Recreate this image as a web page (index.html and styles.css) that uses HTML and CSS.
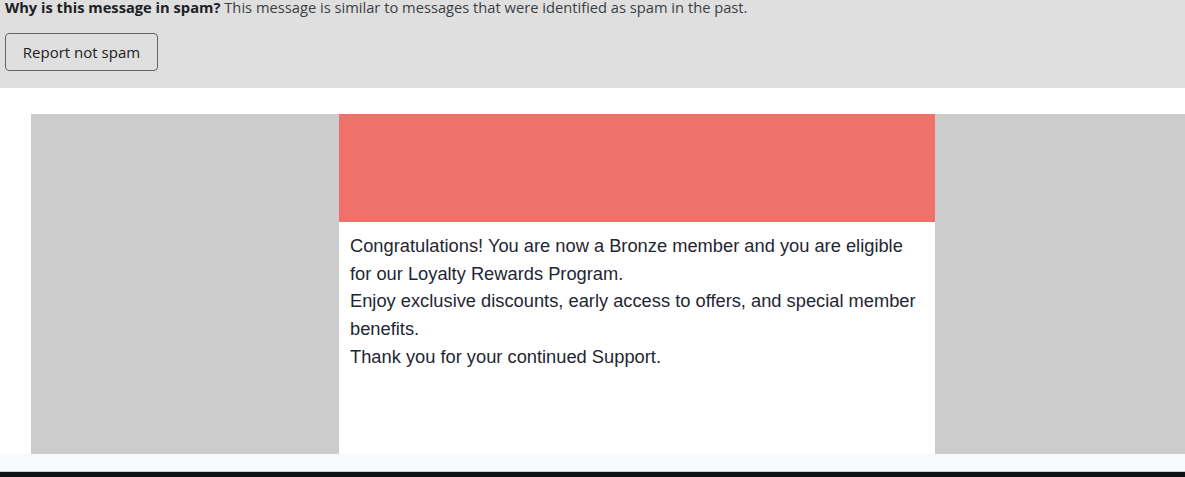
FILE: index.html
```html
<!DOCTYPE html>
<html lang="en">
<head>
<meta charset="utf-8">
<title>Spam message</title>
<link rel="stylesheet" href="styles.css">
</head>
<body>
<div class="banner">
  <p class="reason"><strong>Why is this message in spam?</strong> This message is similar to messages that were identified as spam in the past.</p>
  <button class="btn" type="button">Report not spam</button>
</div>
<div class="mail">
  <div class="side"></div>
  <div class="center">
    <div class="hero"></div>
    <div class="content">
      <p>Congratulations! You are now a Bronze member and you are eligible for our Loyalty Rewards Program.<br>Enjoy exclusive discounts, early access to offers, and special member benefits.<br>Thank you for your continued Support.</p>
    </div>
  </div>
  <div class="side side-right"></div>
</div>
<div class="band"></div>
<div class="dark"></div>
</body>
</html>
```
FILE: styles.css
```css
html, body {
  margin: 0;
  padding: 0;
  background: #ffffff;
  overflow: hidden;
}
.banner {
  background: #dfdfdf;
  height: 88px;
  padding: 0 5px;
  box-sizing: border-box;
  font-family: "Open Sans", "Noto Sans", sans-serif;
  color: #202124;
}
.reason {
  margin: 0;
  font-size: 14.7px;
  line-height: 15px;
  color: #3c4043;
}
.reason strong {
  font-weight: 700;
  color: #202124;
}
.btn {
  margin-top: 18px;
  height: 38px;
  width: 153px;
  border: 1px solid #5f6368;
  border-radius: 4px;
  background: transparent;
  font-family: "Open Sans", "Noto Sans", sans-serif;
  font-size: 15px;
  font-weight: 500;
  color: #202124;
  padding: 0;
}
.mail {
  display: flex;
  padding: 26px 0 0 31px;
  height: 366px;
  box-sizing: border-box;
}
.side {
  width: 308px;
  background: #cccccc;
}
.side-right {
  flex: 1;
  width: auto;
}
.center {
  width: 596px;
  background: #ffffff;
  display: flex;
  flex-direction: column;
}
.hero {
  height: 108px;
  background: #ee716a;
}
.content {
  padding: 10px 11px;
  font-family: "Liberation Sans", Arial, sans-serif;
  font-size: 18.3px;
  line-height: 27.7px;
  color: #1f2633;
}
.content p {
  margin: 0;
}
.band {
  height: 17px;
  background: #f8f9fc;
  border-bottom: 1px solid #c8cbd0;
}
.dark {
  height: 10px;
  background: #0d1115;
}
```
